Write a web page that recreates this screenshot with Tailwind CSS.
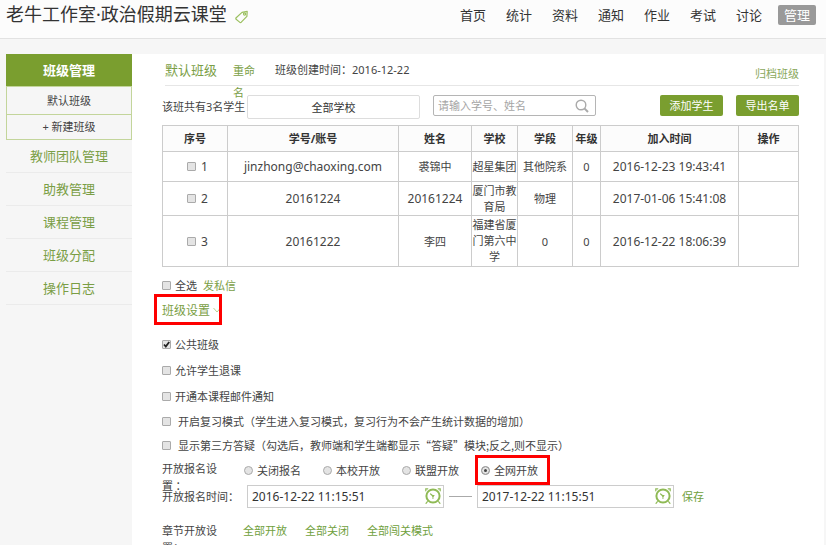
<!DOCTYPE html>
<html lang="zh-CN">
<head>
<meta charset="utf-8">
<meta name="viewport" content="width=device-width, initial-scale=1">
<title>老牛工作室·政治假期云课堂</title>
<script src="https://cdn.jsdelivr.net/npm/@tailwindcss/browser@4"></script>
</head>
<body class="bg-[#f6f6f6] font-['Noto_Sans','Noto_Sans_CJK_SC',sans-serif] text-[11px] leading-[17px] text-[#444]">
<svg class="hidden" aria-hidden="true">
  <symbol id="clock" viewBox="0 0 18 18">
    <g fill="none" stroke="#8fba55" stroke-linecap="round">
      <circle cx="9" cy="9" r="6.6" stroke-width="2"/>
      <path d="M1.8 3.8V1.8h2M14.2 1.8h2v2M3.4 14.6l-1.4 1.8M14.6 14.6l1.4 1.8" stroke-width="1.2"/>
      <path d="M6.6 7 9 9" stroke-width="1.2"/>
    </g>
    <path d="M7.6 8h3.2L9.4 10v2h-.9v-2z" fill="#8fba55"/>
  </symbol>
</svg>
<div class="flex h-screen flex-col overflow-y-auto [scrollbar-width:none]">
  <header class="flex h-[39px] shrink-0 items-start justify-between border-b border-[#e2e2e2] bg-[#fcfcfc] pl-[6px] pr-[10px]">
    <div class="flex items-center gap-2">
      <h1 class="text-[18px] leading-[29px] text-[#333]">老牛工作室·政治假期云课堂</h1>
      <a href="#" aria-label="标签" class="mt-1">
        <svg width="14" height="14" viewBox="0 0 14 14" fill="none" stroke="#9bc05f" stroke-width="1.2" stroke-linejoin="round"><path d="M7 2.4 12.2 1.4l-.3 5-5.6 5.8q-.9.7-1.7-.1L1.1 9.3q-.6-.8.1-1.6z"/><circle cx="9.6" cy="4" r="1.1"/></svg>
      </a>
    </div>
    <nav class="flex gap-[12px] pt-[5px] text-[13px] leading-[20px] text-[#333]">
      <a href="#" class="px-[4px]">首页</a>
      <a href="#" class="px-[4px]">统计</a>
      <a href="#" class="px-[4px]">资料</a>
      <a href="#" class="px-[4px]">通知</a>
      <a href="#" class="px-[4px]">作业</a>
      <a href="#" class="px-[4px]">考试</a>
      <a href="#" class="px-[4px]">讨论</a>
      <a href="#" class="rounded-[2px] bg-[#999] px-[6px] text-white">管理</a>
    </nav>
  </header>

  <div class="flex flex-1 pl-[6px] pr-[2px] pt-[15px]">
    <aside class="w-[126px] shrink-0 text-center">
      <a href="#" class="block bg-[#7a9e2f] text-[13px] font-bold leading-[32px] text-white">班级管理</a>
      <div class="border border-[#c3d59b] text-[#444]">
        <a href="#" class="block border-b border-[#c3d59b] leading-[27px]">默认班级</a>
        <a href="#" class="block leading-[24px]">+ 新建班级</a>
      </div>
      <nav class="divide-y divide-[#ebebeb] border-b border-[#ebebeb] text-[13px] leading-[32px] text-[#7a9e45]">
        <a href="#" class="block">教师团队管理</a>
        <a href="#" class="block">助教管理</a>
        <a href="#" class="block">课程管理</a>
        <a href="#" class="block">班级分配</a>
        <a href="#" class="block">操作日志</a>
      </nav>
    </aside>

    <main class="min-w-0 flex-1 bg-white pl-[30px] pr-[25px]">
      <div class="ml-[3px] flex h-[32px] items-start border-b border-[#e6e6e6]">
        <h2 class="w-[68px] text-[13px] leading-[32px] text-[#7a9e45]">默认班级</h2>
        <a href="#" class="w-[24px] pt-[6px] leading-[22px] text-[#7a9e45]">重命名</a>
        <p class="pl-[18px] leading-[32px]">班级创建时间：2016-12-22</p>
        <a href="#" class="ml-auto leading-[40px] text-[#8aa85c]">归档班级</a>
      </div>

      <div class="mt-[9px] flex h-[30px] items-start">
        <label for="school" class="w-[85px] whitespace-nowrap leading-[24px]">该班共有3名学生</label>
        <select id="school" class="h-[24px] w-[173px] appearance-none rounded-[2px] border border-[#ddd] bg-white text-center [text-align-last:center] text-[#333]"><option>全部学校</option></select>
        <div class="relative ml-[13px]">
          <input type="search" aria-label="搜索学生" placeholder="请输入学号、姓名" class="h-[21px] w-[163px] appearance-none rounded-[2px] border border-[#b5b5b5] pl-[4px] pr-[24px] placeholder:text-[#a5a5a5]">
          <svg class="absolute right-[7px] top-[4px]" width="14" height="14" viewBox="0 0 14 14" fill="none" stroke="#aaa" stroke-width="1.4"><circle cx="6" cy="6" r="4.8"/><path d="m9.4 9.4 3.6 3.6" stroke-width="2"/></svg>
        </div>
        <button class="ml-auto h-[21px] w-[63px] rounded-[2px] bg-[#7a9e2f] text-white">添加学生</button>
        <button class="ml-[13px] h-[21px] w-[63px] rounded-[2px] bg-[#7a9e2f] text-white">导出名单</button>
      </div>

      <table class="w-full table-fixed border-collapse text-center [&_td]:border [&_td]:border-[#ccc] [&_th]:border [&_th]:border-[#ccc]">
        <colgroup><col class="w-[65px]"><col class="w-[171px]"><col class="w-[73px]"><col class="w-[46px]"><col class="w-[55px]"><col class="w-[28px]"><col class="w-[138px]"><col class="w-[60px]"></colgroup>
        <thead>
          <tr class="h-[26px] bg-[#fcfcfc] text-[#333]"><th>序号</th><th>学号/账号</th><th>姓名</th><th>学校</th><th>学段</th><th>年级</th><th>加入时间</th><th>操作</th></tr>
        </thead>
        <tbody>
          <tr class="h-[30px]">
            <td><label class="flex items-center justify-center gap-[5px] pl-[5px] text-[12px]"><input type="checkbox" class="size-[9px] appearance-none rounded-[1px] border border-[#aaa] bg-[#e4e4e4]">1</label></td>
            <td class="text-[12px]">jinzhong@chaoxing.com</td><td>裘锦中</td><td class="whitespace-nowrap">超星集团</td><td>其他院系</td><td>0</td><td class="text-[12px]">2016-12-23 19:43:41</td><td></td>
          </tr>
          <tr class="h-[34px]">
            <td><label class="flex items-center justify-center gap-[5px] pl-[5px] text-[12px]"><input type="checkbox" class="size-[9px] appearance-none rounded-[1px] border border-[#aaa] bg-[#e4e4e4]">2</label></td>
            <td class="text-[12px]">20161224</td><td class="text-[12px]">20161224</td><td class="leading-[16px]">厦门市教育局</td><td>物理</td><td></td><td class="text-[12px]">2017-01-06 15:41:08</td><td></td>
          </tr>
          <tr class="h-[51px]">
            <td><label class="flex items-center justify-center gap-[5px] pl-[5px] text-[12px]"><input type="checkbox" class="size-[9px] appearance-none rounded-[1px] border border-[#aaa] bg-[#e4e4e4]">3</label></td>
            <td class="text-[12px]">20161222</td><td>李四</td><td class="leading-[16px]">福建省厦门第六中学</td><td>0</td><td>0</td><td class="text-[12px]">2016-12-22 18:06:39</td><td></td>
          </tr>
        </tbody>
      </table>

      <div class="mt-[6px] flex h-[24px] items-center gap-[6px]">
        <label class="flex items-center gap-[4px]"><input type="checkbox" class="size-[9px] appearance-none rounded-[1px] border border-[#aaa] bg-[#e4e4e4]">全选</label>
        <a href="#" class="text-[#7a9e45]">发私信</a>
      </div>
      <div class="flex h-[26px] items-center">
        <button class="relative flex items-center gap-[3px] text-[12px] text-[#7a9e45]">班级设置
          <svg width="8" height="6" viewBox="0 0 8 6" fill="none" stroke="#b9cf90"><path d="m.5 1 3.5 4 3.5-4"/></svg>
          <span class="absolute -left-[8px] -right-[1px] -top-[8px] -bottom-[6px] border-[3px] border-[#fe0000]"></span>
        </button>
      </div>

      <form class="mt-[8px] font-['Noto_Sans_CJK_SC',sans-serif]">
        <label class="flex h-[26px] items-center gap-[4px]">
          <span class="relative flex"><input type="checkbox" checked class="peer size-[9px] appearance-none rounded-[1px] border border-[#aaa] bg-[#e4e4e4]"><svg class="pointer-events-none absolute inset-0 hidden peer-checked:block" width="9" height="9" viewBox="0 0 9 9" fill="none" stroke="#222" stroke-width="1.8"><path d="m2 4.5 1.8 2L7.2 2"/></svg></span>公共班级</label>
        <label class="flex h-[26px] items-center gap-[4px]"><input type="checkbox" class="size-[9px] appearance-none rounded-[1px] border border-[#aaa] bg-[#e4e4e4]">允许学生退课</label>
        <label class="flex h-[26px] items-center gap-[4px]"><input type="checkbox" class="size-[9px] appearance-none rounded-[1px] border border-[#aaa] bg-[#e4e4e4]">开通本课程邮件通知</label>
        <label class="flex h-[24px] items-center gap-[7px]"><input type="checkbox" class="size-[9px] appearance-none rounded-[1px] border border-[#aaa] bg-[#e4e4e4]">开启复习模式（学生进入复习模式，复习行为不会产生统计数据的增加）</label>
        <label class="flex h-[25px] items-center gap-[7px]"><input type="checkbox" class="size-[9px] appearance-none rounded-[1px] border border-[#aaa] bg-[#e4e4e4]">显示第三方答疑（勾选后，教师端和学生端都显示“答疑”模块;反之,则不显示）</label>

        <fieldset class="h-[24px]">
          <div class="flex h-full items-start">
            <span id="open-label" class="w-[60px] pt-[2px] leading-[17px]">开放报名设置&nbsp;：</span>
            <div role="radiogroup" aria-labelledby="open-label" class="flex gap-[22px] pl-[22px] pt-[4px]">
              <label class="flex items-center gap-[4px] whitespace-nowrap"><input type="radio" name="open" class="size-[9px] appearance-none rounded-full border border-[#aaa] bg-[#e4e4e4] checked:bg-[#444] checked:shadow-[inset_0_0_0_2px_#e4e4e4]">关闭报名</label>
              <label class="flex items-center gap-[4px] whitespace-nowrap"><input type="radio" name="open" class="size-[9px] appearance-none rounded-full border border-[#aaa] bg-[#e4e4e4] checked:bg-[#444] checked:shadow-[inset_0_0_0_2px_#e4e4e4]">本校开放</label>
              <label class="flex items-center gap-[4px] whitespace-nowrap"><input type="radio" name="open" class="size-[9px] appearance-none rounded-full border border-[#aaa] bg-[#e4e4e4] checked:bg-[#444] checked:shadow-[inset_0_0_0_2px_#e4e4e4]">联盟开放</label>
              <label class="relative flex items-center gap-[4px] whitespace-nowrap"><input type="radio" name="open" checked class="size-[9px] appearance-none rounded-full border border-[#aaa] bg-[#e4e4e4] checked:bg-[#444] checked:shadow-[inset_0_0_0_2px_#e4e4e4]">全网开放
                <span class="absolute -left-[6px] -right-[12px] -top-[7px] -bottom-[6px] z-10 border-[3px] border-[#fe0000]"></span></label>
            </div>
          </div>
        </fieldset>

        <div class="flex h-[28px] items-center">
          <label for="start" class="w-[85px] whitespace-nowrap">开放报名时间：</label>
          <div class="relative">
            <input id="start" value="2016-12-22 11:15:51" class="h-[23px] w-[197px] border border-[#ccc] bg-white pl-[4px] font-['Noto_Sans',sans-serif] text-[12px] text-[#333]">
            <svg class="absolute right-[2px] top-[2px]" width="18" height="18"><use href="#clock"/></svg>
          </div>
          <span class="mx-[5px] h-px w-[23px] bg-[#aaa]"></span>
          <div class="relative">
            <input aria-label="结束时间" value="2017-12-22 11:15:51" class="h-[23px] w-[197px] border border-[#ccc] bg-white pl-[4px] font-['Noto_Sans',sans-serif] text-[12px] text-[#333]">
            <svg class="absolute right-[2px] top-[2px]" width="18" height="18"><use href="#clock"/></svg>
          </div>
          <button type="button" class="ml-[8px] text-[#6fa03c]">保存</button>
        </div>

        <div class="mt-[12px] flex items-start leading-[17px]">
          <span class="w-[60px]">章节开放设置：</span>
          <div class="flex gap-[18px] pl-[21px] text-[#6fa03c]">
            <a href="#">全部开放</a>
            <a href="#">全部关闭</a>
            <a href="#">全部闯关模式</a>
          </div>
        </div>
      </form>
    </main>
  </div>
</div>
</body>
</html>
